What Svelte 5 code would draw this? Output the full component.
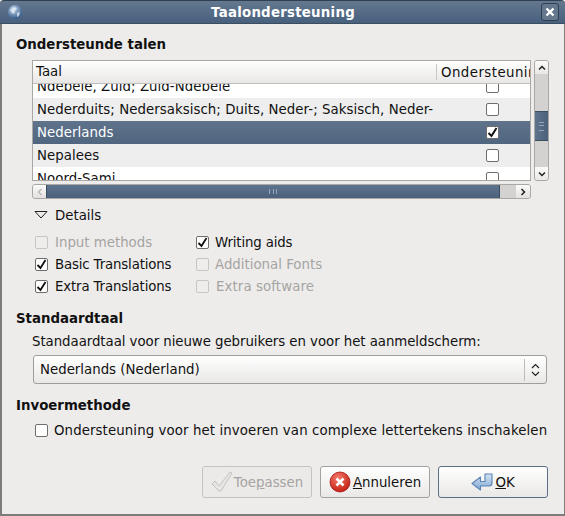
<script>
  const rows = [
    { name: 'Ndebele, Zuid; Zuid-Ndebele', on: false },
    { name: 'Nederduits; Nedersaksisch; Duits, Neder-; Saksisch, Neder-', on: false, alt: true },
    { name: 'Nederlands', on: true, sel: true },
    { name: 'Nepalees', on: false, alt: true },
    { name: 'Noord-Sami', on: false }
  ];
</script>

<div class="win">
  <header class="title">
    <svg class="globe" width="16" height="16" viewBox="0 0 16 16"><defs><radialGradient id="g" cx=".4" cy=".3" r=".8"><stop offset="0" stop-color="#c3d6ea"/><stop offset="1" stop-color="#1f4a7d"/></radialGradient></defs><circle cx="8" cy="8" r="7" fill="url(#g)"/><path d="M3 6l4-3 3 1-2 3-1 3-2-1zM10 9l3-1-1 4-2 1z" fill="#eef2f6" opacity=".7"/></svg>
    <span class="ttext">Taalondersteuning</span>
    <span class="close"><svg width="10" height="10" viewBox="0 0 10 10"><path d="M1.5 1.5l7 7M8.5 1.5l-7 7" stroke="#fff" stroke-width="2.4"/></svg></span>
  </header>

  <main class="body">
    <h2 class="h1">Ondersteunde talen</h2>

    <div class="treewrap">
      <div class="treecol">
        <div class="tree">
          <div class="thead">
            <div class="th1">Taal</div>
            <div class="th2">Ondersteuning</div>
          </div>
          <div class="tbody">
            <div class="rows">
              {#each rows as r}
                <div class="row" class:alt={r.alt} class:sel={r.sel}>
                  <span class="rname">{r.name}</span>
                  <span class="rcheck"><span class="cb">
                    {#if r.on}<svg width="11" height="11" viewBox="0 0 11 11"><path d="M1.5 6l3 3 5-8" fill="none" stroke="#111" stroke-width="2"/></svg>{/if}
                  </span></span>
                </div>
              {/each}
            </div>
          </div>
        </div>
        <div class="hscroll">
          <span class="hbtn hleft"><svg width="6" height="8" viewBox="0 0 6 8"><path d="M4.5 1l-3 3 3 3" fill="none" stroke="#b5b5b3" stroke-width="1.3"/></svg></span>
          <span class="hthumb"><span class="hgrip"></span></span>
          <span class="htrack"></span>
          <span class="hbtn hright"><svg width="6" height="8" viewBox="0 0 6 8"><path d="M1.5 1l3 3-3 3" fill="none" stroke="#222" stroke-width="1.5"/></svg></span>
        </div>
      </div>
      <div class="vscroll">
        <span class="vbtn vup"><svg width="8" height="6" viewBox="0 0 8 6"><path d="M1 4.5l3-3 3 3" fill="none" stroke="#222" stroke-width="1.5"/></svg></span>
        <span class="vtrack t1"></span>
        <span class="vthumb"><span class="vgrip"></span></span>
        <span class="vtrack t2"></span>
        <span class="vbtn vdown"><svg width="8" height="6" viewBox="0 0 8 6"><path d="M1 1.5l3 3 3-3" fill="none" stroke="#222" stroke-width="1.5"/></svg></span>
      </div>
    </div>

    <div class="details">
      <svg width="14" height="10" viewBox="0 0 14 10"><path d="M1 1.5h12L7 8z" fill="#edeceb" stroke="#222" stroke-width="1"/></svg>
      <span>Details</span>
    </div>

    <div class="opts">
      <div class="opt off"><span class="cb off"></span>Input methods</div>
      <div class="opt tight c2"><span class="cb"><svg width="11" height="11" viewBox="0 0 11 11"><path d="M1.5 6l3 3 5-8" fill="none" stroke="#111" stroke-width="1.8"/></svg></span>Writing aids</div>
      <div class="opt tight"><span class="cb"><svg width="11" height="11" viewBox="0 0 11 11"><path d="M1.5 6l3 3 5-8" fill="none" stroke="#111" stroke-width="1.8"/></svg></span>Basic Translations</div>
      <div class="opt off c2"><span class="cb off"></span>Additional Fonts</div>
      <div class="opt tight"><span class="cb"><svg width="11" height="11" viewBox="0 0 11 11"><path d="M1.5 6l3 3 5-8" fill="none" stroke="#111" stroke-width="1.8"/></svg></span>Extra Translations</div>
      <div class="opt off wide"><span class="cb off"></span>Extra software</div>
    </div>

    <h2 class="h2">Standaardtaal</h2>
    <p class="lbl">Standaardtaal voor nieuwe gebruikers en voor het aanmeldscherm:</p>
    <div class="combo">
      <span class="ctext">Nederlands (Nederland)</span>
      <span class="carrow"><svg width="9" height="14" viewBox="0 0 9 14"><path d="M1 5l3.5-3.5L8 5M1 9l3.5 3.5L8 9" fill="none" stroke="#222" stroke-width="1.2"/></svg></span>
    </div>

    <h2 class="h3">Invoermethode</h2>
    <div class="im"><span class="cb"></span>Ondersteuning voor het invoeren van complexe lettertekens inschakelen</div>

    <div class="buttons">
      <div class="btn dis">
        <svg width="22" height="22" viewBox="0 0 22 22"><path d="M1 13l3-3 4 5L19 1l2 1-11 18H8z" fill="#e6e5e3" stroke="#c4c3c1" stroke-width="1"/></svg>
        <span>Toe<u>p</u>assen</span>
      </div>
      <div class="btn">
        <svg width="22" height="22" viewBox="0 0 22 22"><defs><radialGradient id="r" cx=".4" cy=".3" r=".8"><stop offset="0" stop-color="#f47a6a"/><stop offset="1" stop-color="#bd1508"/></radialGradient></defs><circle cx="11" cy="11" r="10" fill="url(#r)" stroke="#a11" stroke-width=".8"/><path d="M7.5 7.5l7 7M14.5 7.5l-7 7" stroke="#fff" stroke-width="2.6"/></svg>
        <span><u>A</u>nnuleren</span>
      </div>
      <div class="btn def">
        <svg width="22" height="21" viewBox="0 0 22 21"><defs><linearGradient id="a" x1="0" y1="0" x2="0" y2="1"><stop offset="0" stop-color="#d5e4f4"/><stop offset="1" stop-color="#7fa6d3"/></linearGradient></defs><path d="M9.5 5L1 11.5l8.5 6.500V14H18q3 0 3-3V2h-7v7.500H9.500z" fill="url(#a)" stroke="#5a82b3" stroke-width="1.100" stroke-linejoin="round"/></svg>
        <span><u>O</u>K</span>
      </div>
    </div>
  </main>
</div>

<style>
  :global(body) { margin: 0; background: #edeceb; }
  .win {
    width: 565px; height: 516px; box-sizing: border-box;
    display: flex; flex-direction: column; overflow: hidden;
    font-family: "DejaVu Sans", sans-serif; font-size: 13.33px; color: #111;
    background: #edeceb;
  }
  .title {
    height: 24px; flex: none; display: flex; align-items: center;
    background: linear-gradient(#64788f, #47607d); color: #fff;
    border-top: 1px solid #2f3f52; border-bottom: 1px solid #3c4d60; box-sizing: border-box;
    border-radius: 4px 4px 0 0;
  }
  .globe { margin-left: 7px; }
  .ttext { flex: 1; text-align: center; font-weight: bold; font-size: 13.33px; letter-spacing: .25px; padding-left: 2px; }
  .close {
    width: 18px; height: 18px; margin-right: 6px; box-sizing: border-box;
    border: 1px solid #2f3f52; border-radius: 3px; background: #64778d;
    display: flex; align-items: center; justify-content: center;
  }
  .body {
    flex: 1; border: solid #7d7c7a; border-width: 0 1px 2px 2px; padding: 0 15px 0 14px;
    display: flex; flex-direction: column; min-height: 0;
  }
  h2 { margin: 0; font-size: 13.33px; font-weight: bold; line-height: 16px; }
  .h1 { margin-top: 13px; }
  .treewrap { display: flex; margin: 7px 0 0 16px; gap: 3px; }
  .treecol { width: 499px; }
  .tree { border: 1px solid #a9a8a5; height: 121px; box-sizing: border-box; background: #fff; overflow: hidden; }
  .thead { display: flex; height: 23px; background: linear-gradient(#fff, #e8e7e5); border-bottom: 1px solid #c0bfbc; box-sizing: border-box; align-items: center; }
  .th1 { width: 404px; padding-left: 3px; box-sizing: border-box; border-right: 1px solid #c8c7c4; height: 16px; line-height: 16px; }
  .th2 { flex: 1; padding-left: 4px; overflow: hidden; white-space: nowrap; letter-spacing: .45px; }
  .tbody { height: 96px; overflow: hidden; }
  .rows { margin-top: -9px; }
  .row { height: 23px; display: flex; align-items: center; background: #fff; }
  .alt { background: #eeeeee; }
  .sel { background: linear-gradient(#5f738b, #50657f); color: #fff; }
  .rname { width: 404px; padding-left: 4px; box-sizing: border-box; white-space: nowrap; overflow: hidden; letter-spacing: .05px; }
  .rcheck { flex: 1; display: flex; justify-content: flex-start; padding-left: 49px; }
  .cb {
    width: 13px; height: 13px; box-sizing: border-box; border: 1px solid #6f6e6c; border-radius: 2px;
    background: #fff; display: inline-flex; align-items: center; justify-content: center; flex: none;
  }
  .cb.off { border-color: #c6c5c3; background: #eeedec; }
  .hscroll { display: flex; height: 15px; margin-top: 3px; box-sizing: border-box; border: 1px solid #a9a8a5; border-radius: 3px; background: #d3d2d0; overflow: hidden; }
  .hbtn { width: 14px; flex: none; display: flex; align-items: center; justify-content: center; background: linear-gradient(#fbfbfa, #e2e1df); }
  .hthumb { width: 452px; flex: none; background: linear-gradient(#5f748d, #4a607b); display: flex; align-items: center; justify-content: center; outline: 1px solid #3c4d60; }
  .htrack { flex: 1; }
  .hgrip { width: 6px; height: 5px; border-left: 1px solid #97a6b7; border-right: 1px solid #97a6b7; }
  .hgrip::after { content: ""; display: block; width: 1px; height: 5px; margin: 0 auto; background: #97a6b7; }
  .vscroll { width: 15px; height: 121px; box-sizing: border-box; border: 1px solid #a9a8a5; border-radius: 3px; background: #d3d2d0; display: flex; flex-direction: column; overflow: hidden; }
  .vbtn { height: 13px; flex: none; display: flex; align-items: center; justify-content: center; background: linear-gradient(#fbfbfa, #e9e8e6); }
  .t1 { height: 37px; flex: none; }
  .t2 { flex: 1; }
  .vthumb { height: 30px; flex: none; background: linear-gradient(90deg, #5f748d, #4a607b); display: flex; align-items: center; justify-content: center; border: solid #3c4d60; border-width: 1px 0; box-sizing: border-box; }
  .vgrip { width: 5px; height: 7px; border-top: 1px solid #97a6b7; border-bottom: 1px solid #97a6b7; }
  .vgrip::after { content: ""; display: block; height: 1px; margin-top: 2px; background: #97a6b7; }
  .details { display: flex; align-items: center; gap: 7px; margin: 8px 0 0 18px; height: 16px; }
  .opts { display: grid; grid-template-columns: 161px 200px; grid-auto-rows: 22px; margin: 8px 0 0 19px; align-items: center; }
  .opt { display: flex; align-items: center; gap: 7px; white-space: nowrap; }
  .opt.off { color: #a5a4a2; }
  .opt.tight { letter-spacing: -.15px; }
  .opt.wide { letter-spacing: .1px; }
  .opt.c2 { gap: 6px; }
  .h2 { margin-top: 14px; }
  .lbl { margin: 7px 0 0 16px; line-height: 16px; letter-spacing: -.05px; }
  .combo {
    margin: 5px 0 0 17px; height: 29px; width: 514px; box-sizing: border-box;
    border: 1px solid #9f9e9b; border-radius: 3px; background: linear-gradient(#fff, #e9e8e6);
    display: flex; align-items: center;
  }
  .ctext { flex: 1; padding-left: 6px; }
  .carrow { width: 21px; height: 22px; border-left: 1px solid #bdbcb9; display: flex; align-items: center; justify-content: center; }
  .h3 { margin-top: 14px; }
  .im { display: flex; align-items: center; gap: 6px; margin: 8px 0 0 19px; white-space: nowrap; height: 16px; letter-spacing: .1px; }
  .buttons { display: flex; justify-content: flex-end; gap: 8px; margin-top: 28px; margin-right: 1px; }
  .btn {
    width: 110px; height: 32px; box-sizing: border-box; border: 1px solid #a3a2a0; border-radius: 3px;
    background: linear-gradient(#fff, #e9e8e6); display: flex; align-items: center; justify-content: center; gap: 2px;
  }
  .btn.dis { background: #ebeae8; color: #a5a4a2; border-color: #c4c3c1; gap: 1px; }
  .btn.def { border: 1.5px solid #5a6f87; gap: 2px; }
</style>
